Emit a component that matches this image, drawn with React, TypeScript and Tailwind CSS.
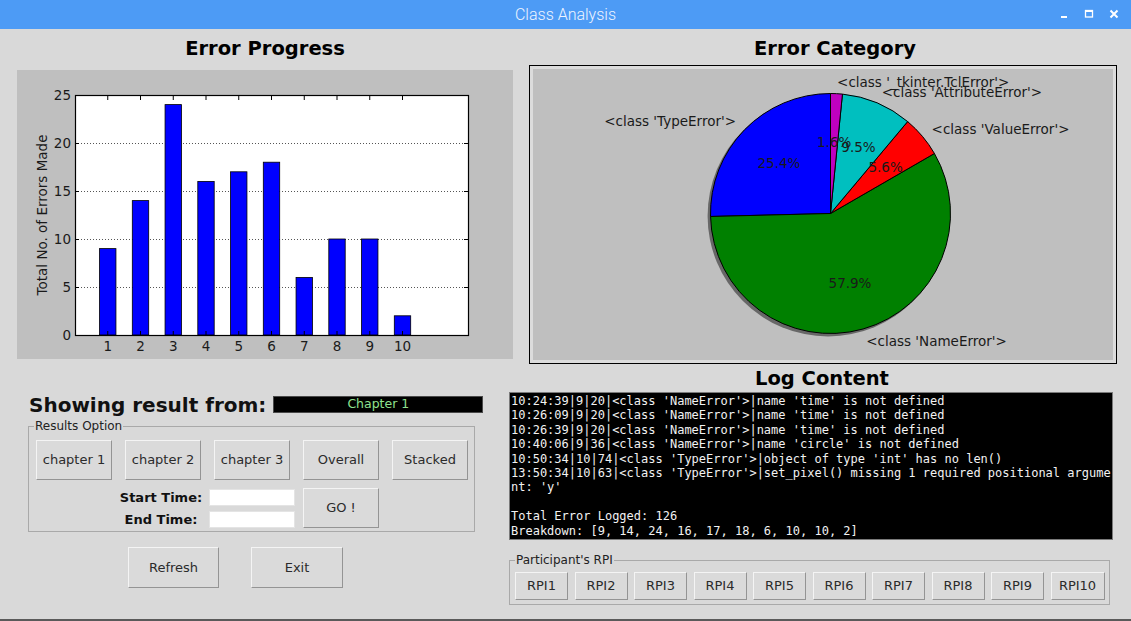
import type { ReactNode } from "react"

const counts = [9, 14, 24, 16, 17, 18, 6, 10, 10, 2]

const logLines = [
  "10:24:39|9|20|<class 'NameError'>|name 'time' is not defined",
  "10:26:09|9|20|<class 'NameError'>|name 'time' is not defined",
  "10:26:39|9|20|<class 'NameError'>|name 'time' is not defined",
  "10:40:06|9|36|<class 'NameError'>|name 'circle' is not defined",
  "10:50:34|10|74|<class 'TypeError'>|object of type 'int' has no len()",
  "13:50:34|10|63|<class 'TypeError'>|set_pixel() missing 1 required positional argume",
  "nt: 'y'",
  "",
  "Total Error Logged: 126",
  "Breakdown: [9, 14, 24, 16, 17, 18, 6, 10, 10, 2]",
]

// pie slices, angles in degrees (counter-clockwise from 3 o'clock, start at 90)
const slices = [
  { name: "<class 'TypeError'>", count: 32, color: "#0000ff" },
  { name: "<class 'NameError'>", count: 73, color: "#008000" },
  { name: "<class 'ValueError'>", count: 7, color: "#ff0000" },
  { name: "<class 'AttributeError'>", count: 12, color: "#00bfbf" },
  { name: "<class '_tkinter.TclError'>", count: 2, color: "#bf00bf" },
]

const font = "DejaVu Sans, sans-serif"

function TkButton({ children, className }: { children: ReactNode; className: string }) {
  return (
    <button
      className={`flex items-center justify-center bg-[#dadada] border border-t-[#f4f4f4] border-l-[#f4f4f4] border-r-[#949494] border-b-[#949494] text-[13px] text-[#2b2b2b] ${className}`}
    >
      {children}
    </button>
  )
}

function BarChart() {
  const px = (v: number) => 58 + v * (393 / 12)
  const py = (v: number) => 265 - v * 9.6
  const ys = [0, 5, 10, 15, 20, 25]
  const xs = [1, 2, 3, 4, 5, 6, 7, 8, 9, 10]

  return (
    <svg width="496" height="289" className="block">
      <rect x="58" y="25" width="393" height="240" fill="#ffffff" />
      {[5, 10, 15, 20].map((v) => (
        <line key={v} x1="58" x2="451" y1={py(v) + 0.5} y2={py(v) + 0.5} stroke="#555" strokeWidth="1" strokeDasharray="1 2" />
      ))}
      {counts.map((c, i) => (
        <rect
          key={i}
          x={px(i + 1) - 8.2}
          y={py(c)}
          width="16.4"
          height={c * 9.6}
          fill="#0000ff"
          stroke="#000"
          strokeWidth="0.8"
        />
      ))}
      <rect x="58.5" y="25.5" width="393" height="240" fill="none" stroke="#000" strokeWidth="1.2" />
      {xs.map((v) => (
        <g key={v}>
          <line x1={px(v)} x2={px(v)} y1="265" y2="261" stroke="#000" />
          <line x1={px(v)} x2={px(v)} y1="26" y2="30" stroke="#000" />
          <text x={px(v)} y="276" fontSize="13.5" fontFamily={font} fill="#1a1a1a" textAnchor="middle" dominantBaseline="central">
            {v}
          </text>
        </g>
      ))}
      {ys.map((v) => (
        <g key={v}>
          <line x1="58" x2="62" y1={py(v) + 0.5} y2={py(v) + 0.5} stroke="#000" />
          <line x1="451" x2="447" y1={py(v) + 0.5} y2={py(v) + 0.5} stroke="#000" />
          <text x="54" y={py(v)} fontSize="13.5" fontFamily={font} fill="#1a1a1a" textAnchor="end" dominantBaseline="central">
            {v}
          </text>
        </g>
      ))}
      <text
        x="25"
        y="145"
        fontSize="13.5"
        fontFamily={font}
        fill="#1a1a1a"
        textAnchor="middle"
        dominantBaseline="central"
        transform="rotate(-90 25 145)"
      >
        Total No. of Errors Made
      </text>
    </svg>
  )
}

function PieChart() {
  const cx = 297.5
  const cy = 144.5
  const r = 120
  const total = slices.reduce((s, d) => s + d.count, 0)
  const pt = (deg: number, rad: number) => {
    const a = (deg * Math.PI) / 180
    return [cx + rad * Math.cos(a), cy - rad * Math.sin(a)]
  }

  let start = 90
  const parts = slices.map((s) => {
    const sweep = (s.count / total) * 360
    const end = start + sweep
    const mid = start + sweep / 2
    const [x1, y1] = pt(start, r)
    const [x2, y2] = pt(end, r)
    const d = `M ${cx} ${cy} L ${x1} ${y1} A ${r} ${r} 0 ${sweep > 180 ? 1 : 0} 0 ${x2} ${y2} Z`
    const [lx, ly] = pt(mid, r * 1.1)
    const [tx, ty] = pt(mid, r * 0.6)
    const pct = ((s.count / total) * 100).toFixed(1) + "%"
    start = end
    return { ...s, d, lx, ly, tx, ty, pct, left: Math.cos((mid * Math.PI) / 180) < 0 }
  })

  return (
    <svg width="580" height="291" className="block">
      <circle cx={cx - 2.4} cy={cy + 2.4} r={r + 0.5} fill="#4a4a4a" opacity="0.75" />
      {parts.map((p) => (
        <path key={p.name} d={p.d} fill={p.color} stroke="#000" strokeWidth="1" strokeLinejoin="round" />
      ))}
      {parts.map((p) => (
        <text
          key={p.name + "l"}
          x={p.lx}
          y={p.ly}
          fontSize="13.5"
          fontFamily={font}
          fill="#1a1a1a"
          textAnchor={p.left ? "end" : "start"}
          dominantBaseline="central"
        >
          {p.name}
        </text>
      ))}
      {parts.map((p) => (
        <text
          key={p.name + "p"}
          x={p.tx}
          y={p.ty}
          fontSize="13.5"
          fontFamily={font}
          fill="#1a1a1a"
          textAnchor="middle"
          dominantBaseline="central"
        >
          {p.pct}
        </text>
      ))}
    </svg>
  )
}

export default function App() {
  return (
    <div className="w-[1131px] h-[621px] flex flex-col bg-[#d9d9d9] overflow-hidden font-['DejaVu_Sans',sans-serif] text-black">
      {/* title bar */}
      <div className="h-[29px] shrink-0 grid grid-cols-[1fr_auto_1fr] items-center bg-[#4d9bf5]">
        <div />
        <div className="font-['Roboto',sans-serif] font-light text-[16px] text-[#eef4ff]">Class Analysis</div>
        <div className="flex justify-end pr-[11px]">
          <svg width="60" height="29" className="block">
            <rect x="1" y="16" width="6" height="2" fill="#fff" />
            <rect x="25.5" y="10.5" width="7" height="6.5" fill="none" stroke="#fff" strokeWidth="1.3" />
            <rect x="25" y="10" width="8" height="2" fill="#fff" />
            <path d="M50.5 10.5 L57.5 17.5 M57.5 10.5 L50.5 17.5" stroke="#fff" strokeWidth="2" />
          </svg>
        </div>
      </div>

      <div className="flex-1 flex">
        {/* left column */}
        <div className="w-[509px] shrink-0 flex flex-col">
          <div className="ml-[17px] w-[496px] h-[41px] pt-[8px] text-center text-[19.5px] leading-[24px] font-bold">
            Error Progress
          </div>
          <div className="ml-[17px] w-[496px] h-[289px] bg-[#bfbfbf]">
            <BarChart />
          </div>

          <div className="mt-[37px] ml-[29px] h-[17px] flex items-center">
            <span className="text-[20px] leading-none font-bold text-[#111]">Showing result from:</span>
            <div className="ml-[7px] w-[210px] h-[17px] bg-black border border-[#4a4a4a] flex items-center justify-center text-[12.5px] leading-none text-[#8fe08f]">
              Chapter 1
            </div>
          </div>

          <div className="relative mt-[13px] ml-[28px] w-[447px] h-[106px] border border-[#a9a9a9]">
            <span className="absolute -top-[8px] left-[5px] px-[1px] bg-[#d9d9d9] text-[12px] leading-[14px] text-[#222]">
              Results Option
            </span>
            <div className="flex gap-[13px] pt-[13px] pl-[7px]">
              <TkButton className="w-[76px] h-[40px]">chapter 1</TkButton>
              <TkButton className="w-[76px] h-[40px]">chapter 2</TkButton>
              <TkButton className="w-[76px] h-[40px]">chapter 3</TkButton>
              <TkButton className="w-[76px] h-[40px]">Overall</TkButton>
              <TkButton className="w-[76px] h-[40px]">Stacked</TkButton>
            </div>
            <div className="flex mt-[8px] ml-[86px]">
              <div className="w-[92px] pt-[1px] flex flex-col gap-[5px] text-[13px] font-bold text-[#111]">
                <div className="h-[17px] leading-[17px] text-center">Start Time:</div>
                <div className="h-[17px] leading-[17px] text-center">End Time:</div>
              </div>
              <div className="ml-[2px] w-[86px] pt-[1px] flex flex-col gap-[5px]">
                <div className="h-[17px] bg-white border border-[#e4e4e4]" />
                <div className="h-[17px] bg-white border border-[#e4e4e4]" />
              </div>
              <TkButton className="ml-[8px] w-[76px] h-[40px]">GO !</TkButton>
            </div>
          </div>

          <div className="mt-[15px] ml-[128px] flex gap-[32px]">
            <TkButton className="w-[91px] h-[41px]">Refresh</TkButton>
            <TkButton className="w-[92px] h-[41px]">Exit</TkButton>
          </div>
        </div>

        {/* right column */}
        <div className="flex-1 flex flex-col">
          <div className="ml-[20px] w-[588px] h-[36px] pt-[8px] pl-[24px] text-center text-[19.5px] leading-[24px] font-bold">
            Error Category
          </div>
          <div className="ml-[20px] w-[588px] h-[299px] border border-black">
            <div className="w-full h-full border-[3px] border-[#dcdcdc] bg-[#bfbfbf]">
              <PieChart />
            </div>
          </div>

          <div className="w-[604px] h-[28px] pt-[2px] pl-[22px] flex items-center justify-center text-[19.5px] leading-[24px] font-bold">
            Log Content
          </div>
          <div className="w-[604px] h-[148px] bg-black border border-[#7a7a7a] pt-[1px] pl-[1px] font-['DejaVu_Sans_Mono',monospace] text-[12px] leading-[14.4px] text-[#f2f2f2]">
            {logLines.map((line, i) => (
              <div key={i} className="h-[14.4px] whitespace-pre">
                {line}
              </div>
            ))}
          </div>

          <div className="relative mt-[20px] w-[601px] h-[45px] border border-[#a9a9a9]">
            <span className="absolute -top-[8px] left-[5px] px-[1px] bg-[#d9d9d9] text-[12px] leading-[14px] text-[#222]">
              Participant's RPI
            </span>
            <div className="flex gap-[6.5px] pt-[11px] pl-[5px]">
              {[1, 2, 3, 4, 5, 6, 7, 8, 9].map((n) => (
                <TkButton key={n} className="w-[53px] h-[28px]">
                  RPI{n}
                </TkButton>
              ))}
              <TkButton className="w-[54px] h-[28px]">RPI10</TkButton>
            </div>
          </div>
        </div>
      </div>

      <div className="h-[2px] shrink-0 bg-[#5a5a5a]" />
    </div>
  )
}
